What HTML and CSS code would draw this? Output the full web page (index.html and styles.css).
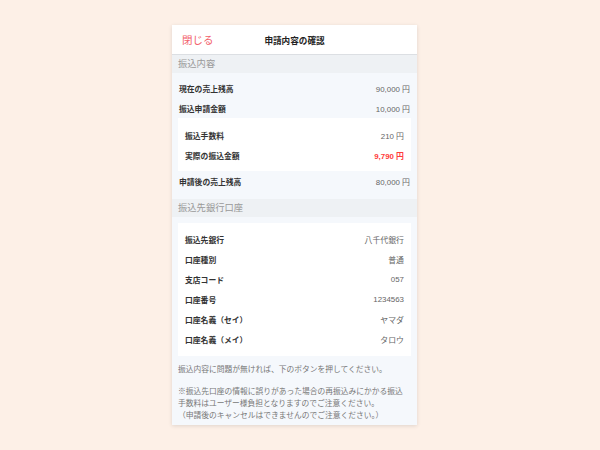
FILE: index.html
```html
<!DOCTYPE html>
<html lang="ja">
<head>
<meta charset="utf-8">
<link rel="stylesheet" href="styles.css">
</head>
<body>
<div class="card">
  <div class="header">
    <span class="close">閉じる</span>
    <span class="title">申請内容の確認</span>
  </div>
  <div class="section-head">振込内容</div>
  <div class="section">
    <div class="row"><span class="label">現在の売上残高</span><span class="value">90,000 円</span></div>
    <div class="row"><span class="label">振込申請金額</span><span class="value">10,000 円</span></div>
    <div class="inner">
      <div class="row"><span class="label">振込手数料</span><span class="value">210 円</span></div>
      <div class="row"><span class="label">実際の振込金額</span><span class="value red">9,790 円</span></div>
    </div>
    <div class="row"><span class="label">申請後の売上残高</span><span class="value">80,000 円</span></div>
  </div>
  <div class="section-head">振込先銀行口座</div>
  <div class="section bank">
    <div class="inner">
      <div class="row"><span class="label">振込先銀行</span><span class="value">八千代銀行</span></div>
      <div class="row"><span class="label">口座種別</span><span class="value">普通</span></div>
      <div class="row"><span class="label">支店コード</span><span class="value">057</span></div>
      <div class="row"><span class="label">口座番号</span><span class="value">1234563</span></div>
      <div class="row"><span class="label">口座名義（セイ）</span><span class="value">ヤマダ</span></div>
      <div class="row"><span class="label">口座名義（メイ）</span><span class="value">タロウ</span></div>
    </div>
    <p class="note">振込内容に問題が無ければ、下のボタンを押してください。</p>
    <p class="note notes">※振込先口座の情報に誤りがあった場合の再振込みにかかる振込手数料はユーザー様負担となりますのでご注意ください。<br>（申請後のキャンセルはできませんのでご注意ください。）</p>
  </div>
</div>
</body>
</html>
```
FILE: styles.css
```css
html, body {
  margin: 0;
  padding: 0;
}
body {
  background: #fdf0e7;
  font-family: "Liberation Sans", "Noto Sans CJK JP", sans-serif;
  width: 600px;
  height: 450px;
  overflow: hidden;
}
.card {
  margin: 25px 0 0 172px;
  width: 245px;
  height: 400px;
  overflow: hidden;
  background: #f5f8fc;
  box-shadow: 0 1px 4px rgba(0, 0, 0, 0.12);
}
.header {
  position: relative;
  height: 29px;
  background: #fff;
  border-bottom: 1px solid #dcdfe3;
  display: flex;
  align-items: center;
  justify-content: center;
}
.close {
  position: absolute;
  left: 10px;
  top: 7px;
  font-size: 10.5px;
  color: #f2606a;
}
.title {
  font-size: 8.6px;
  font-weight: bold;
  color: #222;
}
.section-head {
  height: 18px;
  line-height: 18px;
  background: #eef1f4;
  color: #999;
  font-size: 9.3px;
  padding-left: 6px;
}
.section {
  padding: 5px 6px 8px 6px;
}
.row {
  height: 20px;
  display: flex;
  align-items: center;
  justify-content: space-between;
  padding: 0 1px;
}
.label {
  font-size: 7.8px;
  font-weight: bold;
  color: #333;
}
.value {
  font-size: 7.9px;
  color: #666;
}
.value.red {
  color: #ff3b3b;
  font-weight: bold;
}
.inner {
  background: #fff;
  padding: 7px 7px 6px 7px;
}
.inner .row {
  padding: 0;
}
.bank {
  padding-top: 6px;
}
.bank .inner {
  padding: 6px 7px 7px 7px;
}
.note {
  margin: 8px 0 0 0;
  padding-right: 5px;
  font-size: 7.75px;
  line-height: 12px;
  color: #777;
}
.notes {
  margin-top: 10px;
}
```
